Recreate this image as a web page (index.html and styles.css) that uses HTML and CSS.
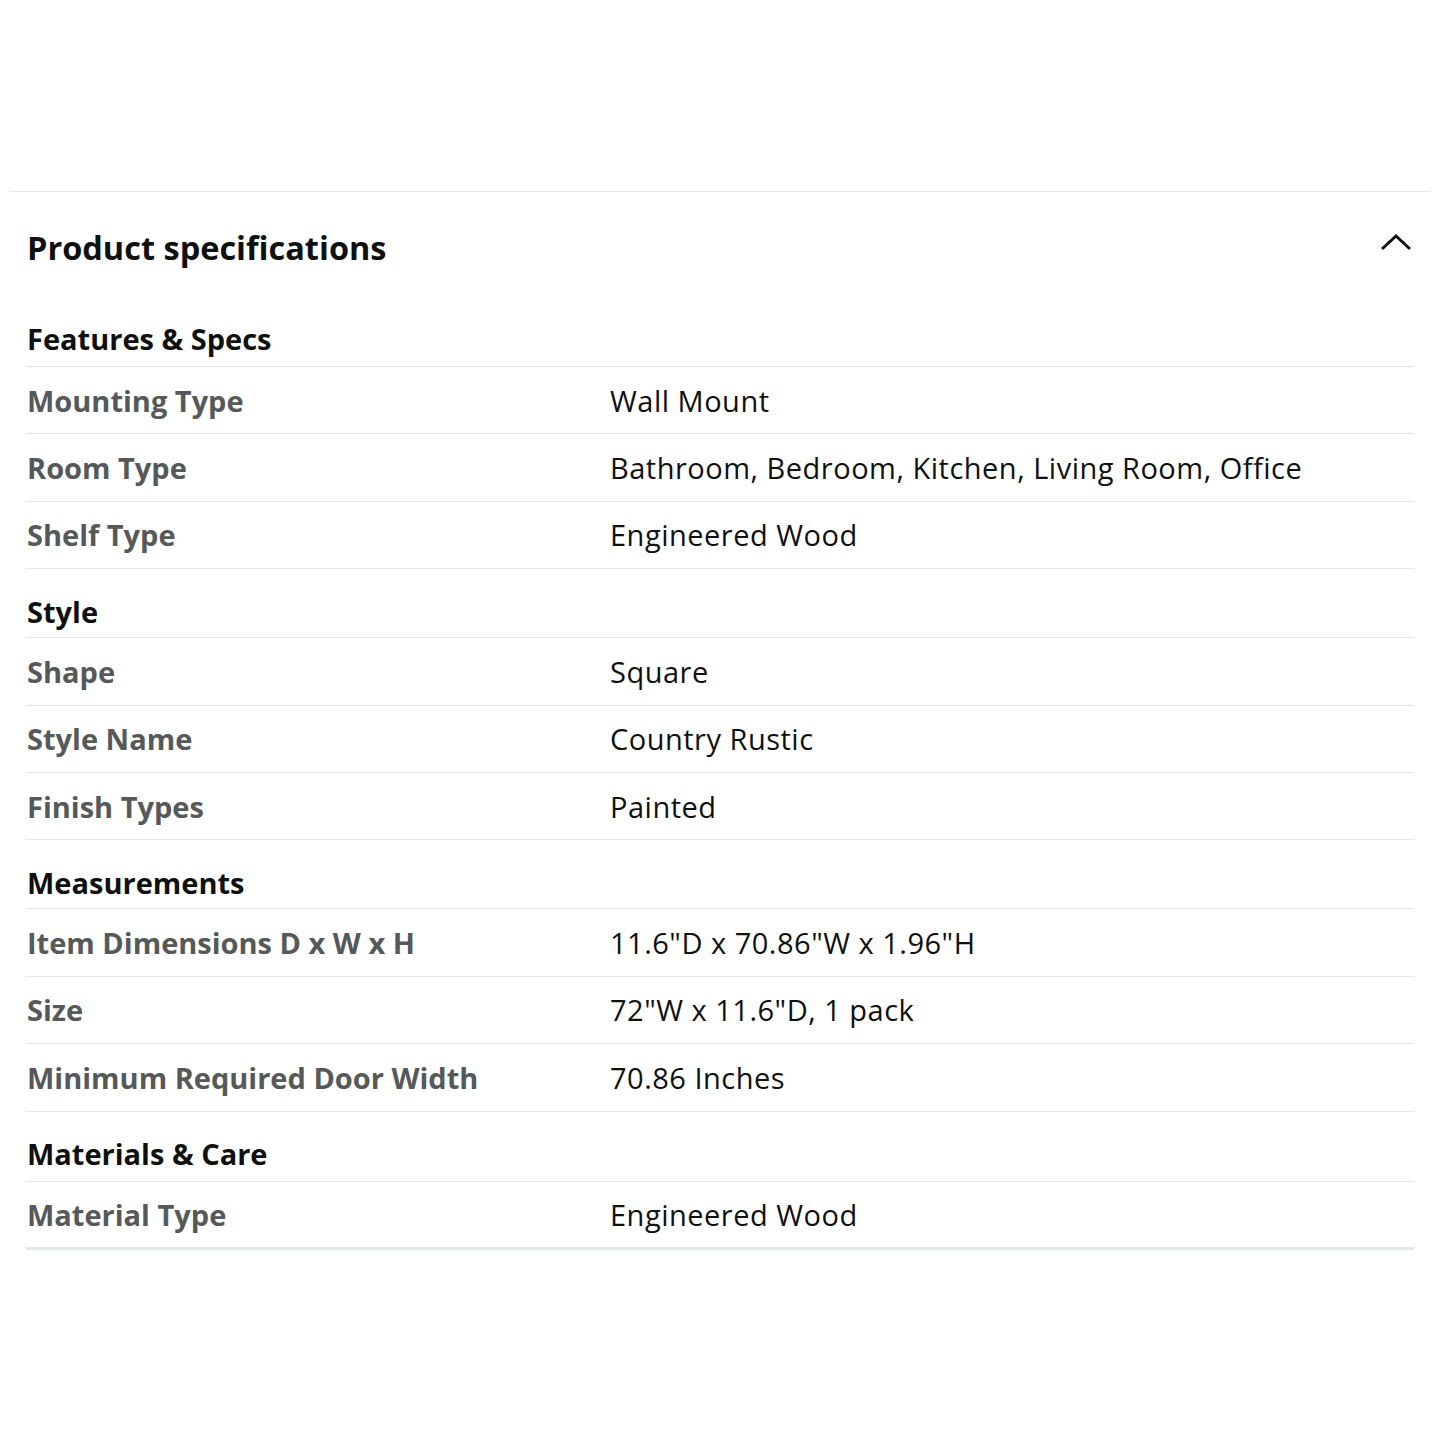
FILE: index.html
```html
<!DOCTYPE html>
<html>
<head>
<meta charset="utf-8">
<link rel="stylesheet" href="styles.css">
</head>
<body>
<div class="page">
  <div class="spacer"></div>
  <section class="panel">
    <div class="panel-head">
      <h2 class="panel-title">Product specifications</h2>
      <svg class="chevron" width="32" height="20" viewBox="0 0 32 20"><path d="M2 17 L16 4 L30 17" fill="none" stroke="#0F1111" stroke-width="3"/></svg>
    </div>
    <div class="specs">
      <h3 class="group first">Features &amp; Specs</h3>
      <div class="row"><div class="label">Mounting Type</div><div class="value">Wall Mount</div></div>
      <div class="row"><div class="label">Room Type</div><div class="value">Bathroom, Bedroom, Kitchen, Living Room, Office</div></div>
      <div class="row"><div class="label">Shelf Type</div><div class="value">Engineered Wood</div></div>
      <h3 class="group">Style</h3>
      <div class="row"><div class="label">Shape</div><div class="value">Square</div></div>
      <div class="row"><div class="label">Style Name</div><div class="value">Country Rustic</div></div>
      <div class="row"><div class="label">Finish Types</div><div class="value">Painted</div></div>
      <h3 class="group">Measurements</h3>
      <div class="row"><div class="label">Item Dimensions D x W x H</div><div class="value">11.6"D x 70.86"W x 1.96"H</div></div>
      <div class="row"><div class="label">Size</div><div class="value">72"W x 11.6"D, 1 pack</div></div>
      <div class="row"><div class="label">Minimum Required Door Width</div><div class="value">70.86 Inches</div></div>
      <h3 class="group wide">Materials &amp; Care</h3>
      <div class="row last"><div class="label">Material Type</div><div class="value">Engineered Wood</div></div>
    </div>
  </section>
</div>
</body>
</html>
```
FILE: styles.css
```css
html, body { margin: 0; padding: 0; background: #fff; }
body { font-family: "Open Sans", "Noto Sans", sans-serif; color: #0F1111; }
.page { width: 1440px; }
.spacer { height: 191px; }
.panel { margin: 0 10px; border-top: 1px solid #e3e6e6; }
.panel-head { display: flex; align-items: center; justify-content: space-between; padding: 0 18px 0 17px; height: 110px; }
.panel-title { margin: 0; font-size: 32.5px; font-weight: 700; }
.chevron { margin-top: -10px; }
.specs { margin: 0 16px; }
.group { margin: 0; font-size: 29px; font-weight: 700; padding: 24px 1px 6px; line-height: 38px; border-bottom: 1px solid #e3e6e6; }
.group.first { padding-top: 18px; padding-bottom: 8px; }
.group.wide { padding-top: 23px; padding-bottom: 8px; }
.row { display: flex; height: 66.4px; align-items: center; border-bottom: 1px solid #e3e6e6; font-size: 29px; }
.row.last { height: 65px; border-bottom: 3px solid #e3e6e6; }
.label { width: 583px; padding-left: 1px; color: #565959; font-weight: 700; }
.value { flex: 1; letter-spacing: 0.5px; }
```
